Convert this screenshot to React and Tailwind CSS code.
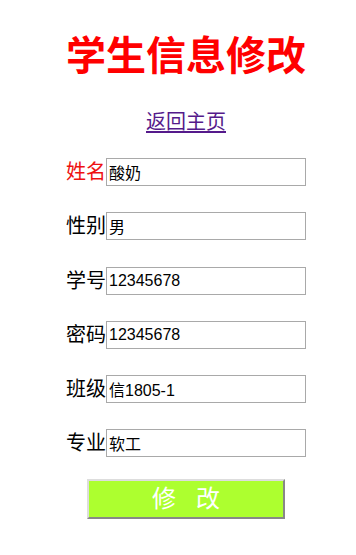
const fields = [
  { label: '姓名', value: '酸奶', red: true },
  { label: '性别', value: '男' },
  { label: '学号', value: '12345678' },
  { label: '密码', value: '12345678' },
  { label: '班级', value: '信1805-1' },
  { label: '专业', value: '软工' },
]

function App() {
  return (
    <div
      className="w-[356px] h-[555px] bg-white pl-4 flex flex-col items-center"
      style={{ fontFamily: '"Liberation Sans", "Noto Sans CJK SC", sans-serif' }}
    >
      <h1 className="mt-[32px] text-[40px] leading-[48px] font-bold text-[#ff0000]">
        学生信息修改
      </h1>
      <a href="#" className="mt-[30px] text-[20px] leading-[24px] text-[#551a8b] underline underline-offset-2">
        返回主页
      </a>
      <div className="mt-[24px] flex flex-col gap-[26.3px]">
        {fields.map((f) => (
          <div key={f.label} className="flex items-center h-[28px]">
            <span className={`text-[20px] leading-[28px] ${f.red ? 'text-[#ee1111]' : 'text-black'}`}>
              {f.label}
            </span>
            <input
              defaultValue={f.value}
              className="w-[200px] h-[28px] border border-[#a9a9a9] px-[2px] text-[16px] text-black outline-none"
            />
          </div>
        ))}
      </div>
      <button className="mt-[22px] w-[198px] h-[40px] bg-[#adff2f] border-2 border-t-[#dddddd] border-l-[#dddddd] border-b-[#888888] border-r-[#888888] flex items-center justify-center gap-[20px] text-white text-[24px]">
        <span>修</span>
        <span>改</span>
      </button>
    </div>
  )
}

export default App
